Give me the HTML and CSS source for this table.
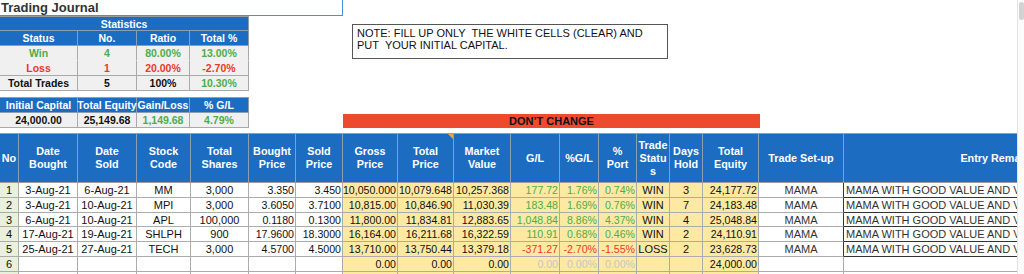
FILE: index.html
```html
<!DOCTYPE html>
<html lang="en">
<head>
<meta charset="utf-8">
<title>Trading Journal</title>
<link rel="stylesheet" href="styles.css">
</head>
<body>
<div class="page">
  <div class="sheet">
    <div class="top">
      <div class="left">
        <div class="title">Trading Journal</div>
        <div class="stats">
          <div class="sh span">Statistics</div>
          <div class="sh">Status</div><div class="sh">No.</div><div class="sh">Ratio</div><div class="sh">Total %</div>
          <div class="sc gr nb">Win</div><div class="sc gr nb">4</div><div class="sc gr nb">80.00%</div><div class="sc gr nb">13.00%</div>
          <div class="sc rd">Loss</div><div class="sc rd">1</div><div class="sc rd">20.00%</div><div class="sc rd">-2.70%</div>
          <div class="sc">Total Trades</div><div class="sc">5</div><div class="sc">100%</div><div class="sc gr">10.30%</div>
        </div>
        <div class="stats2">
          <div class="sh">Initial Capital</div><div class="sh">Total Equity</div><div class="sh">Gain/Loss</div><div class="sh">% G/L</div>
          <div class="sc">24,000.00</div><div class="sc">25,149.68</div><div class="sc gr">1,149.68</div><div class="sc gr">4.79%</div>
        </div>
      </div>
      <div class="right">
        <div class="note">NOTE: FILL UP ONLY&nbsp; THE WHITE CELLS (CLEAR) AND<br>PUT&nbsp; YOUR INITIAL CAPITAL.</div>
        <div class="bar">DON’T CHANGE</div>
      </div>
    </div>

    <div class="journal">
      <div class="th">No</div>
      <div class="th">Date<br>Bought</div>
      <div class="th">Date<br>Sold</div>
      <div class="th">Stock<br>Code</div>
      <div class="th">Total<br>Shares</div>
      <div class="th">Bought<br>Price</div>
      <div class="th">Sold<br>Price</div>
      <div class="th">Gross<br>Price</div>
      <div class="th comment">Total<br>Price</div>
      <div class="th">Market<br>Value</div>
      <div class="th">G/L</div>
      <div class="th">%G/L</div>
      <div class="th">%<br>Port</div>
      <div class="th">Trade<br>Statu<br>s</div>
      <div class="th">Days<br>Hold</div>
      <div class="th">Total<br>Equity</div>
      <div class="th">Trade Set-up</div>
      <div class="th">Entry Remarks</div>

      <div class="td n">1</div><div class="td c">3-Aug-21</div><div class="td c">6-Aug-21</div><div class="td c">MM</div><div class="td c">3,000</div><div class="td r">3.350</div><div class="td r">3.450</div>
      <div class="td y r">10,050.000</div><div class="td y r">10,079.648</div><div class="td y r">10,257.368</div><div class="td y r gr">177.72</div><div class="td y r gr">1.76%</div><div class="td y r gr">0.74%</div><div class="td y c">WIN</div><div class="td y c">3</div><div class="td y r">24,177.72</div>
      <div class="td c su sx">MAMA</div><div class="td l su ex">MAMA WITH GOOD VALUE AND VOLUME</div>

      <div class="td n">2</div><div class="td c">3-Aug-21</div><div class="td c">10-Aug-21</div><div class="td c">MPI</div><div class="td c">3,000</div><div class="td r">3.6050</div><div class="td r">3.7100</div>
      <div class="td y r">10,815.00</div><div class="td y r">10,846.90</div><div class="td y r">11,030.39</div><div class="td y r gr">183.48</div><div class="td y r gr">1.69%</div><div class="td y r gr">0.76%</div><div class="td y c">WIN</div><div class="td y c">7</div><div class="td y r">24,183.48</div>
      <div class="td c su sx">MAMA</div><div class="td l su ex">MAMA WITH GOOD VALUE AND VOLUME</div>

      <div class="td n">3</div><div class="td c">6-Aug-21</div><div class="td c">10-Aug-21</div><div class="td c">APL</div><div class="td c">100,000</div><div class="td r">0.1180</div><div class="td r">0.1300</div>
      <div class="td y r">11,800.00</div><div class="td y r">11,834.81</div><div class="td y r">12,883.65</div><div class="td y r gr">1,048.84</div><div class="td y r gr">8.86%</div><div class="td y r gr">4.37%</div><div class="td y c">WIN</div><div class="td y c">4</div><div class="td y r">25,048.84</div>
      <div class="td c su sx">MAMA</div><div class="td l su ex">MAMA WITH GOOD VALUE AND VOLUME</div>

      <div class="td n">4</div><div class="td c">17-Aug-21</div><div class="td c">19-Aug-21</div><div class="td c">SHLPH</div><div class="td c">900</div><div class="td r">17.9600</div><div class="td r">18.3000</div>
      <div class="td y r">16,164.00</div><div class="td y r">16,211.68</div><div class="td y r">16,322.59</div><div class="td y r gr">110.91</div><div class="td y r gr">0.68%</div><div class="td y r gr">0.46%</div><div class="td y c">WIN</div><div class="td y c">2</div><div class="td y r">24,110.91</div>
      <div class="td c su sx">MAMA</div><div class="td l su ex">MAMA WITH GOOD VALUE AND VOLUME</div>

      <div class="td n">5</div><div class="td c">25-Aug-21</div><div class="td c">27-Aug-21</div><div class="td c">TECH</div><div class="td c">3,000</div><div class="td r">4.5700</div><div class="td r">4.5000</div>
      <div class="td y r">13,710.00</div><div class="td y r">13,750.44</div><div class="td y r">13,379.18</div><div class="td y r rd">-371.27</div><div class="td y r rd">-2.70%</div><div class="td y r rd">-1.55%</div><div class="td y c">LOSS</div><div class="td y c">2</div><div class="td y r">23,628.73</div>
      <div class="td c su sx">MAMA</div><div class="td l su ex">MAMA WITH GOOD VALUE AND VOLUME</div>

      <div class="td n">6</div><div class="td"></div><div class="td"></div><div class="td"></div><div class="td"></div><div class="td"></div><div class="td"></div>
      <div class="td y r">0.00</div><div class="td y r">0.00</div><div class="td y r">0.00</div><div class="td y r lt">0.00</div><div class="td y r lt">0.00%</div><div class="td y r lt">0.00%</div><div class="td y"></div><div class="td y"></div><div class="td y r">24,000.00</div>
      <div class="td"></div><div class="td"></div>

      <div class="td n"></div><div class="td"></div><div class="td"></div><div class="td"></div><div class="td"></div><div class="td"></div><div class="td"></div>
      <div class="td y"></div><div class="td y"></div><div class="td y"></div><div class="td y"></div><div class="td y"></div><div class="td y"></div><div class="td y"></div><div class="td y"></div><div class="td y"></div>
      <div class="td"></div><div class="td"></div>
    </div>
  </div>
  <div class="gutter"><div class="thumb"></div></div>
</div>
</body>
</html>
```

FILE: styles.css
```css
html, body {
  margin: 0;
  padding: 0;
  background: #ffffff;
}
body {
  height: 274px;
  overflow: hidden;
  font-family: "Liberation Sans", Arial, Helvetica, sans-serif;
  font-size: 11px;
  color: #111111;
}
.page {
  display: flex;
  height: 274px;
}
.sheet {
  width: 1017px;
  flex: none;
  overflow: hidden;
}
.gutter {
  width: 7px;
  flex: none;
  box-sizing: border-box;
  border-left: 1px solid #e4e4e4;
  padding: 2px 0 0 1px;
  background: #fbfbfb;
}
.thumb {
  width: 5px;
  height: 18px;
  border-radius: 3px;
  background: #d2d2d2;
}

/* top area */
.top {
  display: flex;
}
.left {
  width: 343px;
  flex: none;
}
.title {
  box-sizing: border-box;
  width: 343px;
  height: 16px;
  border-right: 1px solid #4a90e2;
  border-bottom: 1px solid #4a90e2;
  padding-left: 1px;
  font-size: 13px;
  font-weight: bold;
  line-height: 15px;
  color: #333333;
}
.stats,
.stats2 {
  display: grid;
  grid-template-columns: 78px 59px 53px 59px;
  width: 249px;
  border-top: 1px solid #9c9c9c;
}
.stats {
  grid-template-rows: 14px 15px 15px 15px 15px;
}
.stats2 {
  grid-template-rows: 15px 15px;
  margin-top: 6px;
}
.sh,
.sc {
  box-sizing: border-box;
  display: flex;
  align-items: center;
  justify-content: center;
  white-space: nowrap;
  font-weight: bold;
  font-size: 10.5px;
}
.sh {
  background: #1c6dc2;
  color: #ffffff;
  border-right: 1px solid #8b9db3;
  border-bottom: 1px solid #8b9db3;
}
.sh.span {
  grid-column: 1 / -1;
}
.sc {
  background: #f0f0f0;
  color: #111111;
  border-right: 1px solid #a9a9a9;
  border-bottom: 1px solid #a9a9a9;
}
.sc.nb {
  border-bottom-color: transparent;
}
.gr { color: #4cad4c; }
.rd { color: #e63a2b; }
.lt { color: #c6c6c6; }

.right {
  display: flex;
  flex-direction: column;
  flex: 1;
}
.note {
  box-sizing: border-box;
  width: 316px;
  height: 35px;
  margin: 24px 0 0 9px;
  padding: 2px 4px 0;
  border: 1px solid #555555;
  line-height: 12px;
  color: #111111;
  white-space: nowrap;
}
.bar {
  margin-top: auto;
  width: 417px;
  height: 14px;
  background: #ee4a30;
  color: #111111;
  font-weight: bold;
  line-height: 15px;
  text-align: center;
}

/* journal */
.journal {
  display: grid;
  width: max-content;
  margin-top: 5px;
  border-top: 1px solid #9c9c9c;
  grid-template-columns: 19px 59px 59px 54px 58px 47px 47px 55px 56px 57px 49px 39px 38px 33px 33px 56px 85px 310px;
  grid-template-rows: 49px 15px 15px 14px 15px 15px 15px 15px;
}
.th {
  box-sizing: border-box;
  display: flex;
  align-items: center;
  justify-content: center;
  text-align: center;
  background: #1c6dc2;
  color: #ffffff;
  font-weight: bold;
  font-size: 10.8px;
  line-height: 13px;
  padding: 0 1px;
  border-right: 1px solid #8b9db3;
  border-bottom: 1px solid #9c9c9c;
}
.th.comment {
  position: relative;
}
.th.comment::after {
  content: "";
  position: absolute;
  top: 0;
  right: 0;
  border-top: 5px solid #f2a33a;
  border-left: 5px solid transparent;
}
.td {
  box-sizing: border-box;
  display: flex;
  align-items: center;
  padding: 0 2px;
  white-space: nowrap;
  overflow: hidden;
  background: #ffffff;
  border-right: 1px solid #acacac;
  border-bottom: 1px solid #acacac;
  line-height: 14px;
}
.td.n {
  justify-content: center;
  background: #e9f0dc;
}
.td.y {
  background: #fde9a2;
}
.td.c { justify-content: center; }
.td.r {
  justify-content: flex-end;
  padding-right: 1px;
  font-size: 10.6px;
}
.td.l { justify-content: flex-start; }
.td.su { color: #333333; }
.td.sx { border-right-color: #333333; }
.td.ex { border-bottom-color: #333333; }
```
